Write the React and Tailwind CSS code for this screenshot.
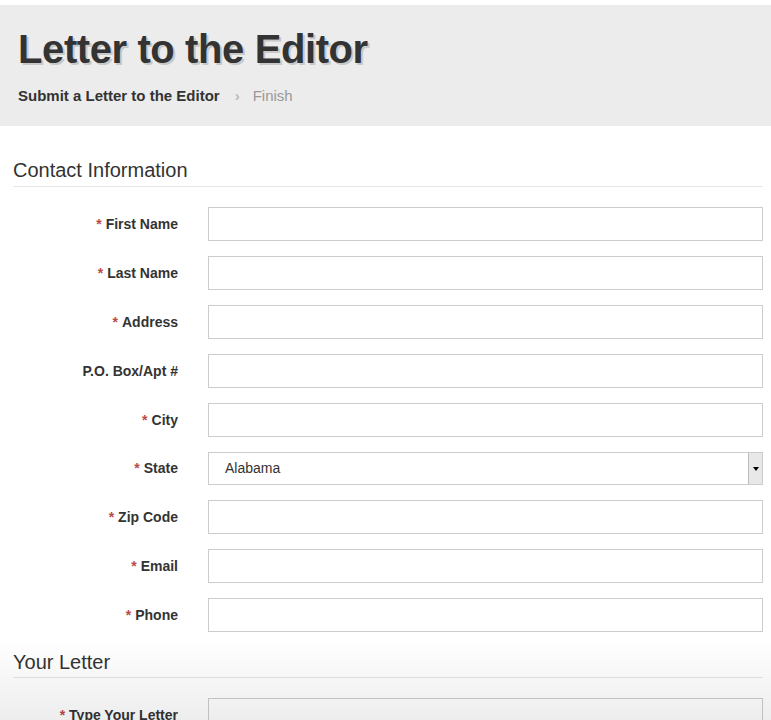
import React from 'react';

const FIELDS = [
  { label: 'First Name', required: true },
  { label: 'Last Name', required: true },
  { label: 'Address', required: true },
  { label: 'P.O. Box/Apt #', required: false },
  { label: 'City', required: true },
  { label: 'State', required: true, select: true },
  { label: 'Zip Code', required: true },
  { label: 'Email', required: true },
  { label: 'Phone', required: true },
];

const Label = ({ text, required }) => (
  <label className="w-[165px] shrink-0 text-right text-[14px] font-bold text-[#333]">
    {required && <span className="text-[#b94a48] mr-1">*</span>}
    {text}
  </label>
);

const Field = ({ label, required, select }) => (
  <div className={`flex items-center ${select ? 'h-[33px]' : 'h-[34px]'}`}>
    <Label text={label} required={required} />
    {select ? (
      <div className="ml-[30px] flex-1 h-[33px] border border-[#ccc] bg-white flex items-center justify-between">
        <span className="pl-4 text-[14px] text-[#333]">Alabama</span>
        <div className="h-[31px] w-[14px] bg-[#e8e8e8] border-l border-[#bbb] flex items-center justify-center">
          <span className="block w-0 h-0 border-l-[3px] border-r-[3px] border-t-[4px] border-l-transparent border-r-transparent border-t-black" />
        </div>
      </div>
    ) : (
      <input type="text" className="ml-[30px] flex-1 h-[34px] border border-[#ccc] bg-white outline-none" />
    )}
  </div>
);

export default function App() {
  return (
    <div className="relative w-[771px] h-[720px] overflow-hidden bg-white font-['Liberation_Sans',Arial,sans-serif] text-[#333]">
      {/* Header */}
      <div className="mt-[5px] h-[121px] bg-[#ececec] pl-[18px] pt-[24px]">
        <h1 className="text-[40px] leading-[40px] font-bold text-[#333] tracking-[-0.4px] [text-shadow:2px_2px_0_#c8c8c8]">
          Letter to the Editor
        </h1>
        <div className="mt-[17px] flex items-center text-[15px] leading-[20px]">
          <span className="font-bold text-[#333]">Submit a Letter to the Editor</span>
          <span className="ml-[15px] text-[#bbb] text-[15px] font-bold">&#8250;</span>
          <span className="ml-[13px] text-[#999]">Finish</span>
        </div>
      </div>

      {/* Contact Information */}
      <div className="pl-[13px] pr-[8px]">
        <h2 className="mt-[31px] text-[20px] leading-[26px] text-[#333] pb-[3px] border-b border-[#e5e5e5]">
          Contact Information
        </h2>
        <div className="mt-[20px] flex flex-col gap-[15px]">
          {FIELDS.map((f) => (
            <Field key={f.label} {...f} />
          ))}
        </div>

        {/* Your Letter */}
        <h2 className="mt-[17px] text-[20px] leading-[26px] text-[#333] pb-[2px] border-b border-[#e5e5e5]">
          Your Letter
        </h2>
        <div className="mt-[20px] flex items-start">
          <label className="w-[165px] shrink-0 text-right text-[14px] font-bold text-[#333] pt-[7px]">
            <span className="text-[#b94a48] mr-1">*</span>
            Type Your Letter
          </label>
          <textarea className="ml-[30px] flex-1 h-[120px] border border-[#ccc] bg-white outline-none resize-none" />
        </div>
      </div>

      {/* bottom fade */}
      <div className="pointer-events-none absolute left-0 right-0 bottom-0 h-[80px] bg-gradient-to-b from-transparent to-[rgba(0,0,0,0.07)]" />
    </div>
  );
}
